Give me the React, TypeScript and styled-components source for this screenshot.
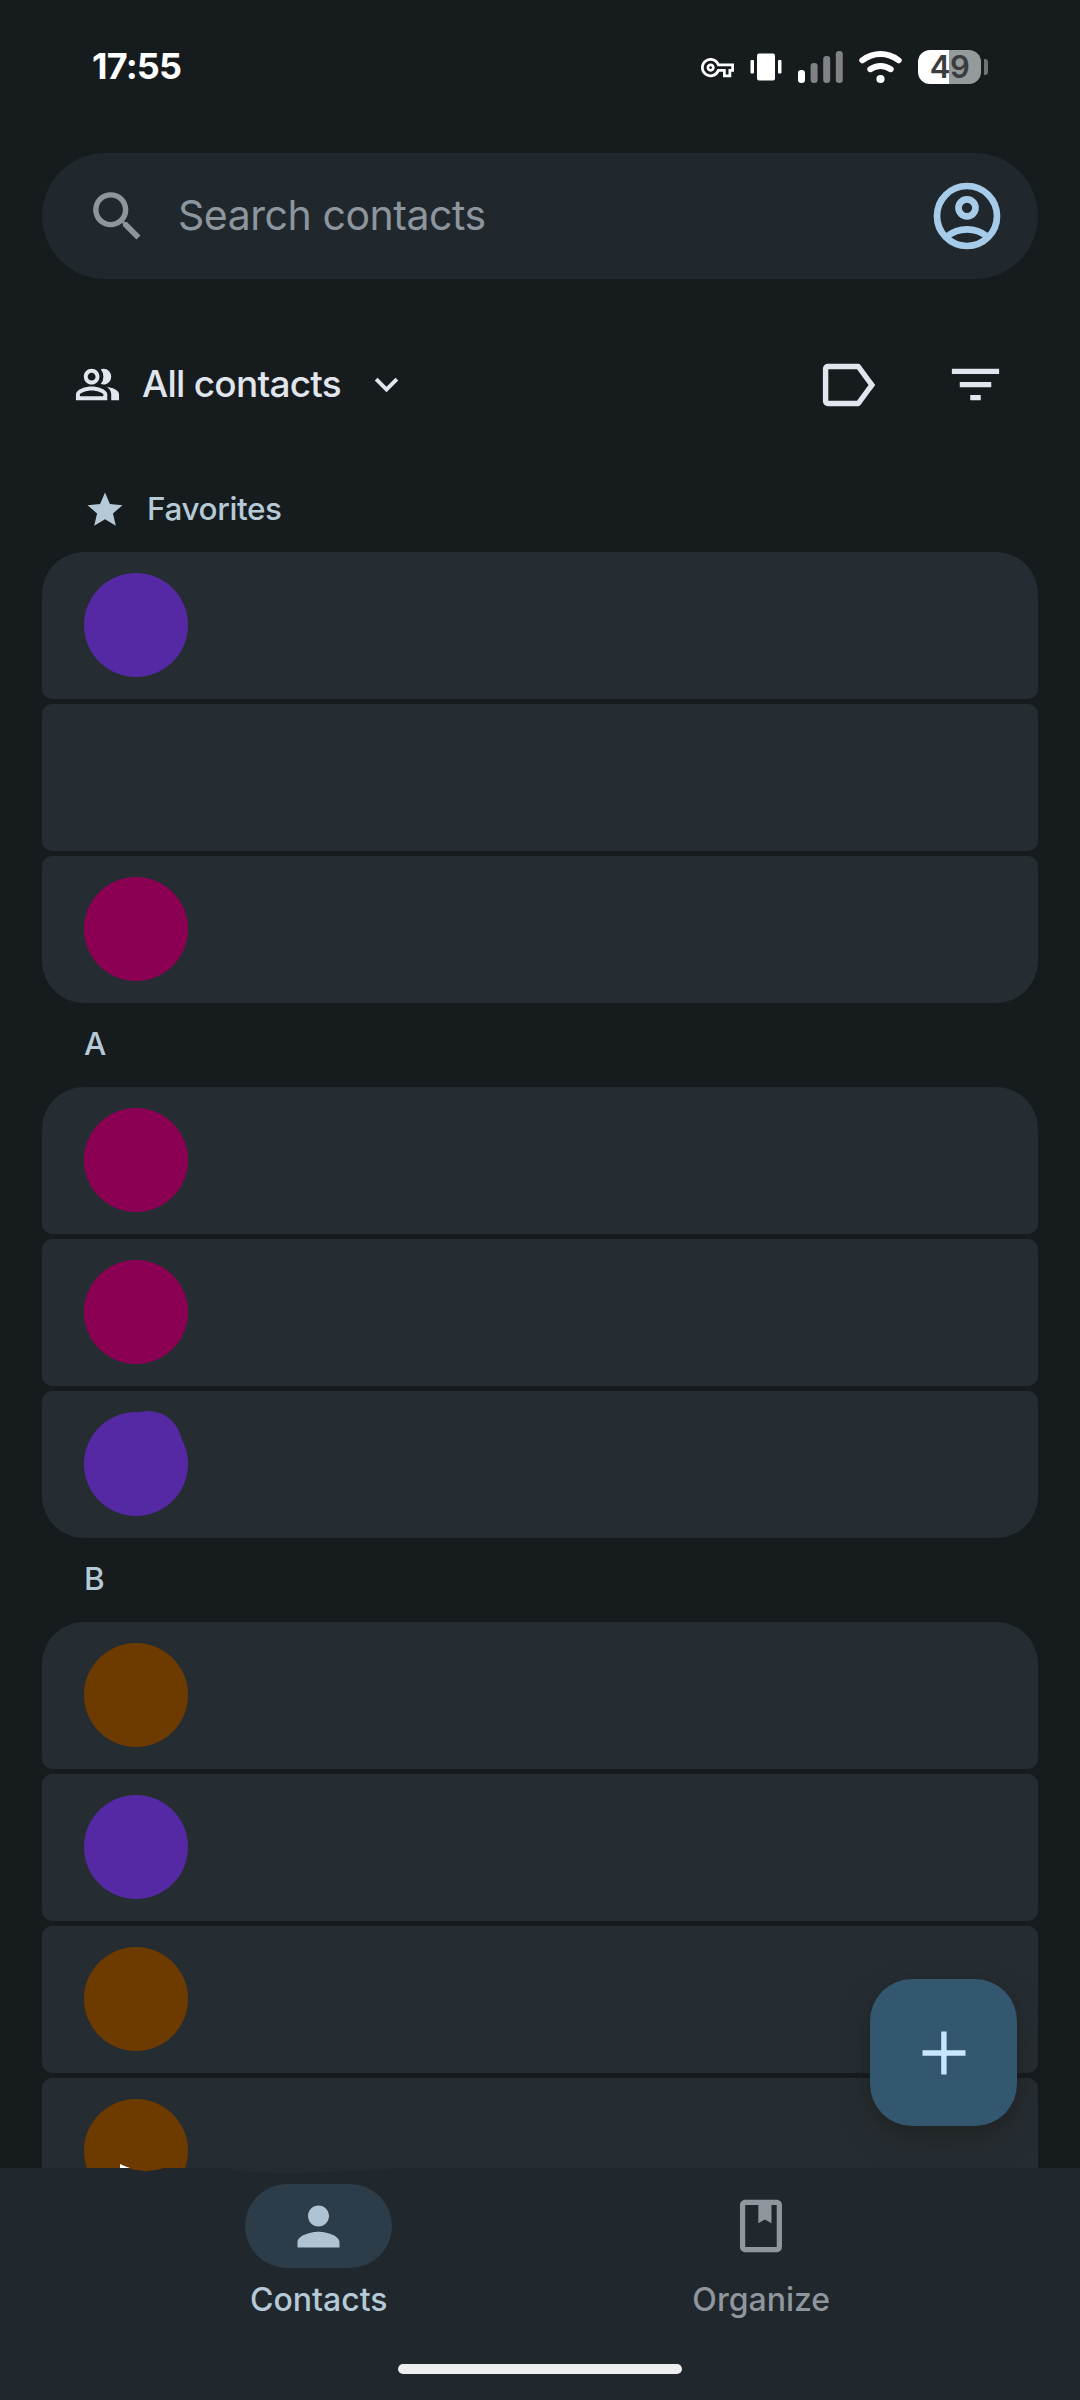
import React from "react";
import styled, { createGlobalStyle } from "styled-components";
import { MdOutlinePeopleAlt, MdKeyboardArrowDown, MdFilterList, MdSearch, MdStar, MdPerson, MdOutlineVpnKey } from "react-icons/md";

const GlobalStyle = createGlobalStyle`
  *, *::before, *::after { box-sizing: border-box; }
  body { margin: 0; background: #161b1e; }
  svg { display: block; flex: none; }
`;

const purple = "#5529a3";
const magenta = "#8c0053";
const brown = "#6d3a00";

const Screen = styled.main`
  position: relative;
  display: flex;
  flex-direction: column;
  width: 1080px;
  height: 2400px;
  overflow: hidden;
  background: #161b1e;
  font-family: Inter, Roboto, sans-serif;
`;

const StatusBar = styled.header`
  display: flex;
  align-items: center;
  justify-content: space-between;
  height: 134px;
  flex: none;
  padding: 0 92px 0 92px;
`;

const Clock = styled.time`
  color: #fff;
  font-size: 36px;
  font-weight: 700;
  line-height: 44px;
  letter-spacing: -0.8px;
  padding-bottom: 2px;
`;

const StatusIcons = styled.div`
  display: flex;
  align-items: center;
  gap: 16px;
`;

const Battery = styled.div`
  display: flex;
  align-items: center;
  gap: 3px;
`;

const BatteryBody = styled.div<{ $level: number }>`
  display: flex;
  align-items: center;
  justify-content: center;
  width: 63px;
  height: 34px;
  border-radius: 12px;
  background: linear-gradient(to right, #fff ${(p) => p.$level}%, #959a9b ${(p) => p.$level}%);
  color: #3b3c3d;
  font-size: 31px;
  font-weight: 600;
  line-height: 34px;
  letter-spacing: -0.5px;
`;

const BatteryTip = styled.div`
  width: 4px;
  height: 16px;
  border-radius: 0 3px 3px 0;
  background: #6f7375;
`;

const SearchBar = styled.div`
  display: flex;
  align-items: center;
  flex: none;
  height: 126px;
  margin: 19px 42px 0;
  padding: 0 37px 0 43px;
  border-radius: 63px;
  background: #20272d;
  color: #8d959d;
`;

const SearchHint = styled.span`
  flex: 1;
  margin-left: 28px;
  padding-bottom: 2px;
  font-size: 41px;
  line-height: 54px;
  letter-spacing: -0.45px;
`;

const Toolbar = styled.div`
  display: flex;
  align-items: center;
  flex: none;
  height: 167px;
  margin-top: 22px;
  padding: 0 73px 0 74px;
  color: #e1e5ee;
`;

const FilterButton = styled.div`
  display: flex;
  align-items: center;
  flex: 1;
`;

const FilterName = styled.span`
  margin: 0 22px 0 21px;
  padding-bottom: 2px;
  font-size: 37px;
  font-weight: 500;
  line-height: 48px;
  letter-spacing: -0.75px;
`;

const Actions = styled.div`
  display: flex;
  align-items: center;
  gap: 68px;
`;

const List = styled.div`
  flex: 1;
  min-height: 0;
  overflow: hidden;
  padding: 0 42px;
`;

const SectionHeader = styled.h2`
  display: flex;
  align-items: center;
  gap: 21px;
  height: 84px;
  margin: 0;
  padding-left: 42px;
  color: #b5c9d7;
  font-size: 31.5px;
  font-weight: 500;
  line-height: 42px;
  letter-spacing: -0.4px;
`;

const SectionTitle = styled.span`
  padding-bottom: 2px;
`;

const Group = styled.div`
  display: flex;
  flex-direction: column;
  gap: 5px;
`;

const Row = styled.div`
  display: flex;
  align-items: flex-start;
  flex: none;
  height: 147px;
  padding: 21px 42px;
  border-radius: 10px;
  background: #262d32;
  &:first-child { border-top-left-radius: 42px; border-top-right-radius: 42px; }
  &:last-child { border-bottom-left-radius: 42px; border-bottom-right-radius: 42px; }
`;

const Avatar = styled.div<{ $color: string }>`
  position: relative;
  width: 104px;
  height: 104px;
  border-radius: 50%;
  background: ${(p) => p.$color};
`;

const AvatarBlob = styled.span`
  position: absolute;
  left: 30px;
  top: -1px;
  width: 68px;
  height: 68px;
  border-radius: 50%;
  background: ${purple};
`;

const Fab = styled.button`
  position: absolute;
  right: 63px;
  bottom: 274px;
  display: flex;
  align-items: center;
  justify-content: center;
  width: 147px;
  height: 147px;
  padding: 0;
  border: 0;
  border-radius: 42px;
  background: #32576e;
  box-shadow: 0 14px 28px rgba(30, 30, 28, 0.5), 0 3px 8px rgba(30, 30, 28, 0.2);
`;

const NavBar = styled.nav`
  position: relative;
  display: flex;
  flex-direction: column;
  align-items: center;
  flex: none;
  height: 232px;
  background: #20272d;
`;

const Smudge = styled.svg`
  position: absolute;
  left: 110px;
  top: -6px;
`;

const Tabs = styled.div`
  display: flex;
  width: 885px;
  height: 196px;
  padding-top: 16px;
`;

const Tab = styled.div<{ $active?: boolean }>`
  display: flex;
  flex: 1;
  flex-direction: column;
  align-items: center;
  color: ${(p) => (p.$active ? "#b5c9d7" : "#8f969e")};
`;

const TabPill = styled.span<{ $active?: boolean }>`
  display: flex;
  align-items: center;
  justify-content: center;
  width: 147px;
  height: 84px;
  border-radius: 42px;
  background: ${(p) => (p.$active ? "#2c3d49" : "transparent")};
  color: ${(p) => (p.$active ? "#b0c3d3" : "#8f969e")};
`;

const TabLabel = styled.span`
  margin-top: 11px;
  font-size: 32px;
  font-weight: 500;
  line-height: 42px;
`;

const HomeIndicator = styled.div`
  width: 284px;
  height: 10px;
  border-radius: 5px;
  background: #eef0ef;
`;

const VibrateIcon = () => (
  <svg width="32" height="28" viewBox="0 0 32 28" fill="#fff">
    <rect x="7" y="0.5" width="18" height="27" rx="2" />
    <rect x="0.5" y="7" width="3.5" height="13.5" rx="1" />
    <rect x="28" y="7" width="3.5" height="13.5" rx="1" />
  </svg>
);

const SignalIcon = () => (
  <svg width="45" height="34" viewBox="0 0 45 34" fill="#818286">
    <rect x="0" y="20" width="7" height="13" rx="3.2" fill="#fff" />
    <rect x="12.6" y="13" width="7" height="20" rx="3.2" />
    <rect x="25.2" y="6" width="7" height="27" rx="3.2" />
    <rect x="37.8" y="1" width="7" height="32" rx="3.2" />
  </svg>
);

const WifiIcon = () => (
  <svg width="43" height="34" viewBox="0 0 43 34" fill="none" stroke="#fff" strokeWidth="6" strokeLinecap="round">
    <path d="M3.3 10.3C14.5 2 28.5 2 39.7 10.3" />
    <path d="M11.3 19.2C17.5 14.8 25.5 14.8 31.7 19.2" />
    <circle cx="21.5" cy="29" r="4.1" fill="#fff" stroke="none" />
  </svg>
);

const AccountIcon = () => (
  <svg width="68" height="68" viewBox="0 0 68 68" fill="none" stroke="#a7cce9" strokeWidth="6.7">
    <circle cx="34" cy="34" r="30" />
    <circle cx="34" cy="25.8" r="8.5" />
    <path d="M14 54.4A31.7 31.7 0 0 1 54 54.4" />
  </svg>
);

const LabelIcon = () => (
  <svg width="54" height="44" viewBox="0 0 54 44" fill="none" stroke="currentColor" strokeWidth="5.4">
    <path d="M6 3.5H36.3L49.8 22L36.3 40.5H6Q3.6 40.5 3.6 38.1V5.900Q3.6 3.5 6 3.5Z" strokeLinejoin="round" />
    <path d="M49.2 17L53.2 22L49.2 27Z" fill="currentColor" stroke="none" />
  </svg>
);

const OrganizeIcon = () => (
  <svg width="63" height="63" viewBox="0.2 0.2 24 24" fill="currentColor">
    <path d="M18 2H6c-1.1 0-2 .9-2 2v16c0 1.1.9 2 2 2h12c1.1 0 2-.9 2-2V4c0-1.1-.9-2-2-2zm0 18H6V4h5v7l2.500-1.500L16 11V4h2v16z" />
  </svg>
);

const PlusIcon = () => (
  <svg width="44" height="44" viewBox="0 0 44 44" fill="#c8e7ff">
    <path d="M19.200.500h5.400v18.800h18.900v5.400H24.600v18.800h-5.400V24.700H.5v-5.400h18.700z" />
  </svg>
);

type Section = { title: string; starred?: boolean; colors: (string | null)[]; blobAt?: number };

const sections: Section[] = [
  { title: "Favorites", starred: true, colors: [purple, null, magenta] },
  { title: "A", colors: [magenta, magenta, purple], blobAt: 2 },
  { title: "B", colors: [brown, purple, brown, brown, brown] },
];

export default function App() {
  return (
    <Screen>
      <GlobalStyle />
      <StatusBar>
        <Clock>17:55</Clock>
        <StatusIcons>
          <MdOutlineVpnKey size={33} color="#fff" />
          <VibrateIcon />
          <SignalIcon />
          <WifiIcon />
          <Battery>
            <BatteryBody $level={49}>49</BatteryBody>
            <BatteryTip />
          </Battery>
        </StatusIcons>
      </StatusBar>
      <SearchBar>
        <MdSearch size={65} />
        <SearchHint>Search contacts</SearchHint>
        <AccountIcon />
      </SearchBar>
      <Toolbar>
        <FilterButton>
          <MdOutlinePeopleAlt size={47} />
          <FilterName>All contacts</FilterName>
          <MdKeyboardArrowDown size={47} />
        </FilterButton>
        <Actions>
          <LabelIcon />
          <MdFilterList size={63} />
        </Actions>
      </Toolbar>
      <List>
        {sections.map((s) => (
          <section key={s.title}>
            <SectionHeader>
              {s.starred && <MdStar size={42} />}
              <SectionTitle>{s.title}</SectionTitle>
            </SectionHeader>
            <Group>
              {s.colors.map((c, i) => (
                <Row key={i}>{c && <Avatar $color={c}>{s.blobAt === i && <AvatarBlob />}</Avatar>}</Row>
              ))}
            </Group>
          </section>
        ))}
      </List>
      <Fab aria-label="Create contact">
        <PlusIcon />
      </Fab>
      <NavBar>
        <Smudge width="300" height="14" viewBox="0 0 300 14">
          <path d="M10 2Q14 4 20 6H10Z" fill="#fff" />
          <path d="M18 6Q36 12.500 54 6Z" fill={brown} />
          <path d="M117 6Q128 10.500 150 10.500Q190 12 240 9Q262 8.500 290 6Z" fill="#252c31" />
        </Smudge>
        <Tabs>
          <Tab $active>
            <TabPill $active>
              <MdPerson size={63} />
            </TabPill>
            <TabLabel>Contacts</TabLabel>
          </Tab>
          <Tab>
            <TabPill>
              <OrganizeIcon />
            </TabPill>
            <TabLabel>Organize</TabLabel>
          </Tab>
        </Tabs>
        <HomeIndicator />
      </NavBar>
    </Screen>
  );
}
